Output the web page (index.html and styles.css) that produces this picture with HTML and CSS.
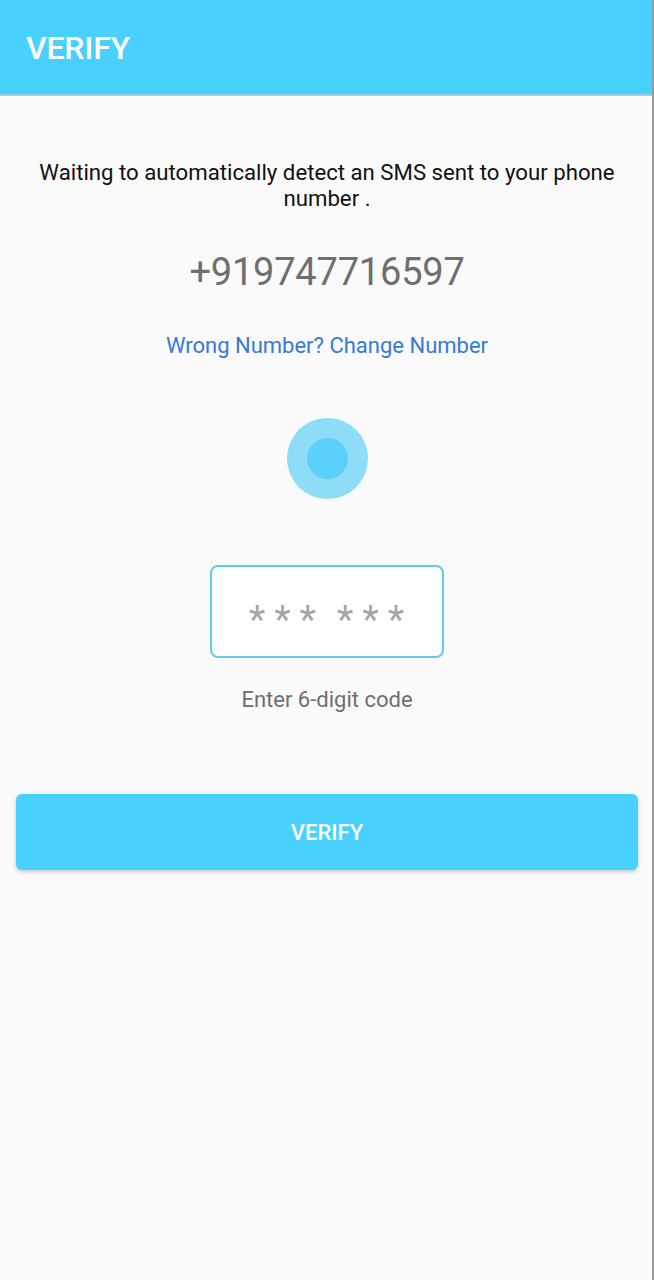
FILE: index.html
```html
<!DOCTYPE html>
<html>
<head>
<meta charset="utf-8">
<link rel="stylesheet" href="styles.css">
</head>
<body>
<div class="screen">
  <header class="appbar"><h1 class="title">VERIFY</h1></header>
  <main class="content">
    <p class="info">Waiting to automatically detect an SMS sent to your phone number .</p>
    <div class="phone">+919747716597</div>
    <a class="change">Wrong Number? Change Number</a>
    <div class="spinner"><div class="spinner-inner"></div></div>
    <div class="code-box"><span class="stars">***</span><span class="stars">***</span></div>
    <div class="hint">Enter 6-digit code</div>
    <button class="verify-btn">VERIFY</button>
  </main>
</div>
</body>
</html>
```
FILE: styles.css
```css
* { box-sizing: border-box; }
html, body { margin: 0; padding: 0; }
body {
  font-family: Roboto, "Noto Sans", sans-serif;
  background: #fafafa;
}
.screen {
  width: 654px;
  height: 1280px;
  background: #fafafa;
  border-right: 2px solid #9a9a9a;
  display: flex;
  flex-direction: column;
}
.appbar {
  height: 96px;
  background: #48d1ff;
  border-bottom: 2px solid #a9cde2;
  display: flex;
  align-items: center;
  padding-left: 26px;
  padding-top: 2px;
  flex-shrink: 0;
}
.title {
  margin: 0;
  color: #fff;
  font-size: 32px;
  font-weight: 500;
  letter-spacing: -0.2px;
}
.content {
  display: flex;
  flex-direction: column;
  align-items: center;
  padding: 0 14px 0 16px;
}
.info {
  margin: 63px 0 0 0;
  width: 620px;
  text-align: center;
  font-size: 22.2px;
  line-height: 26px;
  color: #111;
}
.phone {
  margin-top: 37px;
  font-size: 38px;
  line-height: 48px;
  color: #6e6e6e;
  letter-spacing: -0.2px;
}
.change {
  margin-top: 37px;
  font-size: 22px;
  line-height: 26px;
  color: #3679d9;
}
.spinner {
  margin-top: 59px;
  width: 81px;
  height: 81px;
  border-radius: 50%;
  background: #8ddcf8;
  display: flex;
  align-items: center;
  justify-content: center;
}
.spinner-inner {
  width: 41px;
  height: 41px;
  border-radius: 50%;
  background: #5ad0fb;
}
.code-box {
  margin-top: 66px;
  width: 234px;
  height: 93px;
  border: 2px solid #5ccfe3;
  border-radius: 8px;
  background: #fff;
  display: flex;
  align-items: center;
  justify-content: center;
  gap: 12px;
  color: #a6a6a6;
  font-size: 38px;
  padding-top: 16px;
  padding-left: 8px;
}
.stars {
  letter-spacing: 9px;
}
.hint {
  margin-top: 29px;
  font-size: 22px;
  line-height: 26px;
  color: #6f6f6f;
}
.verify-btn {
  margin-top: 81px;
  width: 622px;
  height: 76px;
  border: none;
  border-radius: 6px;
  background: #48d1ff;
  color: #fff;
  font-family: Roboto, "Noto Sans", sans-serif;
  font-size: 22px;
  font-weight: 500;
  box-shadow: 0 2px 4px rgba(0,0,0,0.2);
}
```
